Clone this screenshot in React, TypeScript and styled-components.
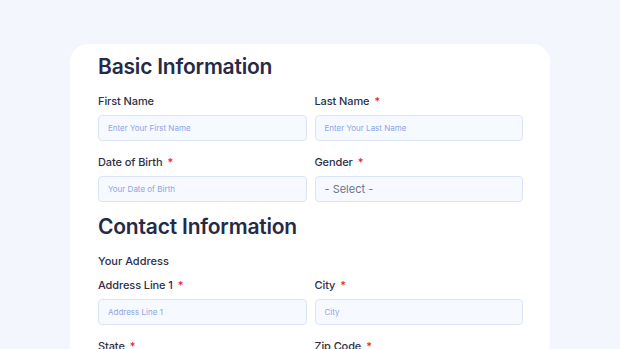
import React from "react";
import styled, { createGlobalStyle } from "styled-components";

const Global = createGlobalStyle`
  html, body { margin: 0; padding: 0; }
  body {
    background: #f3f6fd;
    font-family: Inter, "Noto Sans", sans-serif;
    overflow: hidden;
  }
`;

const Page = styled.div`
  width: 620px;
  height: 349px;
  overflow: hidden;
  padding-top: 44px;
  box-sizing: border-box;
`;

const Card = styled.div`
  margin-left: 70px;
  width: 480px;
  min-height: 400px;
  box-sizing: border-box;
  background: #ffffff;
  border-radius: 18px;
  padding: 10px 27px 0 28px;
`;

const Heading = styled.h2<{ $top?: number }>`
  margin: ${(p) => p.$top ?? 0}px 0 0;
  font-size: 21px;
  line-height: 26px;
  font-weight: 600;
  color: #262a46;
  letter-spacing: -0.2px;
`;

const SubLabel = styled.div`
  margin-top: 14px;
  font-size: 11px;
  line-height: 14px;
  font-weight: 500;
  color: #2e2f48;
`;

const Grid = styled.div<{ $top: number }>`
  margin-top: ${(p) => p.$top}px;
  display: grid;
  grid-template-columns: 1fr 1fr;
  column-gap: 8px;
  row-gap: 14px;
`;

const Field = styled.div`
  display: flex;
  flex-direction: column;
  gap: 7px;
`;

const Label = styled.label`
  font-size: 11px;
  line-height: 14px;
  font-weight: 500;
  color: #2e2f48;
  letter-spacing: -0.1px;
`;

const Star = styled.span`
  color: #e0202a;
  margin-left: 5px;
`;

const Input = styled.div<{ $select?: boolean }>`
  height: 26px;
  box-sizing: border-box;
  border: 1px solid #dbe4f6;
  background: #f6f9ff;
  border-radius: 4px;
  display: flex;
  align-items: center;
  padding-left: 9px;
  font-size: ${(p) => (p.$select ? "11px" : "8px")};
  color: ${(p) => (p.$select ? "#6e7385" : "#8ea5e3")};
`;

type F = { label: string; req?: boolean; ph: string; select?: boolean };

const FieldBox = ({ label, req, ph, select }: F) => (
  <Field>
    <Label>
      {label}
      {req && <Star>*</Star>}
    </Label>
    <Input $select={select}>{ph}</Input>
  </Field>
);

export default function App() {
  return (
    <Page>
      <Global />
      <Card>
        <Heading>Basic Information</Heading>
        <Grid $top={14}>
          <FieldBox label="First Name" ph="Enter Your First Name" />
          <FieldBox label="Last Name" req ph="Enter Your Last Name" />
          <FieldBox label="Date of Birth" req ph="Your Date of Birth" />
          <FieldBox label="Gender" req ph="- Select -" select />
        </Grid>
        <Heading $top={12}>Contact Information</Heading>
        <SubLabel>Your Address</SubLabel>
        <Grid $top={10}>
          <FieldBox label="Address Line 1" req ph="Address Line 1" />
          <FieldBox label="City" req ph="City" />
          <FieldBox label="State" req ph="State" />
          <FieldBox label="Zip Code" req ph="Zip Code" />
        </Grid>
      </Card>
    </Page>
  );
}
